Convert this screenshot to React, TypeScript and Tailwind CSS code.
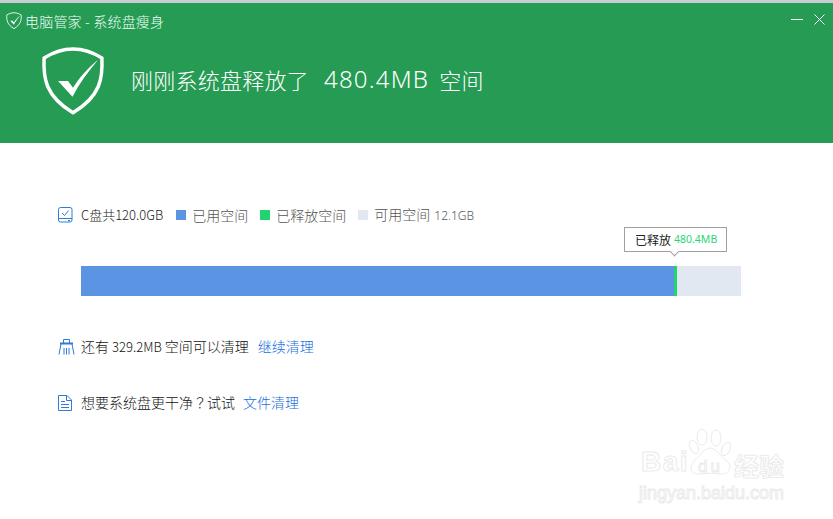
const cjk = "font-['Noto_Sans_CJK_SC','Liberation_Sans',sans-serif]";

function Legend({ color, label, extra }: { color: string; label: string; extra?: string }) {
  return (
    <div className="flex items-center">
      <span className={`w-[10px] h-[10px] ${color}`} />
      <span className="ml-[6px] text-[14px] leading-[16px] font-light text-[#555] mt-[-1px]">
        {label}
        {extra && <span className="font-['Noto_Sans'] text-[12px] ml-[4px]">{extra}</span>}
      </span>
    </div>
  );
}

function Shield({ size }: { size: number }) {
  return (
    <svg width={size} height={size * 1.09} viewBox="0 0 64 70" fill="none">
      <path
        d="M32 3C42 3 53 7 61 12C62 32 60 50 32 67C4 50 2 32 3 12C11 7 22 3 32 3Z"
        stroke="white"
        strokeWidth="3.5"
        strokeLinejoin="round"
      />
      <path d="M17 35L27 35L32 42C38 32 47 22 57 14C47 26 38 38 31.5 51Z" fill="white" />
    </svg>
  );
}

function DiskIcon() {
  return (
    <svg width="15" height="16" viewBox="0 0 15 16" fill="none" stroke="#2f7bdb">
      <rect x="0.5" y="0.5" width="13.5" height="14.5" rx="2" />
      <path d="M1 11.5H14" />
      <path d="M4 6L6.5 8.5L10.5 3.5" />
      <path d="M10 13.5H12" />
    </svg>
  );
}

function BroomIcon() {
  return (
    <svg width="17" height="16" viewBox="0 0 17 16" fill="none" stroke="#2f7bdb">
      <path d="M5.5 4V0.5H11.5V4" />
      <path d="M2 4.5H15" strokeWidth="2" />
      <path d="M3 5L1 15.5M14 5L16 15.5" />
      <path d="M6 9V15.5M8.5 9V15.5M11 9V15.5" />
    </svg>
  );
}

function DocIcon() {
  return (
    <svg width="14" height="16" viewBox="0 0 14 16" fill="none" stroke="#2f7bdb">
      <path d="M0.5 0.5H9L13.5 5V15.5H0.5Z" />
      <path d="M8.5 0.5V5.5H13.5" />
      <path d="M3 6.5H7M3 9.5H11M3 12.5H11" />
    </svg>
  );
}

function Watermark() {
  const outline = "text-white [-webkit-text-stroke:1px_#ebebeb]";
  return (
    <div className="absolute left-[638px] top-[428px] w-[160px] h-[80px] pointer-events-none">
      <svg className="absolute left-[50px] top-[0px]" width="46" height="48" viewBox="0 0 46 48" fill="white" stroke="#ebebeb">
        <ellipse cx="14" cy="9" rx="5" ry="8" />
        <ellipse cx="28" cy="10" rx="5" ry="8" />
        <ellipse cx="6" cy="19" rx="4" ry="7" transform="rotate(-25 6 19)" />
        <ellipse cx="38" cy="21" rx="4" ry="7" transform="rotate(25 38 21)" />
        <path d="M22 20C30 21 32 29 39 33C45 39 41 47 32 46C26 45 18 45 12 46C3 47 0 39 6 33C12 29 14 21 22 20Z" />
      </svg>
      <span className={`absolute left-[3px] top-[18px] font-['Liberation_Sans'] font-bold text-[28px] leading-[32px] tracking-[1.5px] ${outline}`}>
        Bai
      </span>
      <span className={`absolute left-[60px] top-[29px] font-['Liberation_Sans'] text-[17px] leading-[20px] tracking-[3px] ${outline}`}>
        du
      </span>
      <span className={`absolute left-[96px] top-[22px] ${cjk} font-bold text-[25px] leading-[30px] ${outline}`}>
        经验
      </span>
      <span className={`absolute left-[1px] top-[54px] font-['Liberation_Sans'] text-[18px] leading-[22px] ${outline}`}>
        jingyan.baidu.com
      </span>
    </div>
  );
}

export default function App() {
  return (
    <div className={`relative w-[833px] h-[519px] overflow-hidden bg-white ${cjk}`}>
      <div className="h-[3px] bg-[#c9ccd0]" />
      <header className="h-[140px] bg-[#259b54] text-white relative">
        <div className="flex items-center h-[35px] pl-[6px]">
          <Shield size={16} />
          <span className="ml-[3px] text-[14px] leading-[16px] tracking-[0.2px] font-light text-[#f0fff5]">
            电脑管家 - 系统盘瘦身
          </span>
        </div>
        <div className="absolute right-[8px] top-[11px] flex items-center gap-[11px]">
          <span className="w-[12px] h-px bg-white" />
          <svg width="11" height="11" viewBox="0 0 11 11" stroke="white">
            <path d="M0.5 0.5L10.5 10.5M10.5 0.5L0.5 10.5" />
          </svg>
        </div>
        <div className="flex items-center pl-[41px] mt-[8px]">
          <Shield size={64} />
          <h1 className="ml-[26px] flex items-center text-[22px] leading-[30px] tracking-[0.25px] font-light mt-[-4px] whitespace-nowrap">
            刚刚系统盘释放了
            <span className="ml-[15px] mr-[10px] font-['Noto_Sans'] font-light text-[24px] tracking-[1.2px]">480.4MB</span>
            空间
          </h1>
        </div>
      </header>

      <main className="pl-[58px] pt-[64px]">
        <div className="flex items-center h-[16px]">
          <DiskIcon />
          <span className="ml-[8px] text-[13px] leading-[16px] font-light text-[#222]">C盘共120.0GB</span>
          <div className="ml-[13px] flex items-center gap-[12px]">
            <Legend color="bg-[#5a94e2]" label="已用空间" />
            <Legend color="bg-[#23d46e]" label="已释放空间" />
            <Legend color="bg-[#e1e8f2]" label="可用空间" extra="12.1GB" />
          </div>
        </div>

        <div className="relative ml-[23px] mt-[43px] w-[660px] h-[30px] flex">
          <div className="w-[593px] bg-[#5a94e2]" />
          <div className="w-[3px] bg-[#23d46e]" />
          <div className="flex-1 bg-[#e1e8f2]" />
          <div className="absolute left-[543px] top-[-39px] w-[103px] h-[25px] bg-white border border-[#a0a0a0] flex items-center pl-[10px] text-[12px] text-[#222] whitespace-nowrap">
            已释放
            <span className="ml-[3px] font-['Noto_Sans'] text-[10.5px] text-[#2ad67a]">480.4MB</span>
            <span className="absolute left-[46px] bottom-[-4px] w-[7px] h-[7px] bg-white border-r border-b border-[#a0a0a0] rotate-45" />
          </div>
        </div>

        <div className="flex items-center h-[16px] mt-[43px]">
          <BroomIcon />
          <span className="ml-[6px] text-[14px] leading-[16px] font-light text-[#111] mt-[-2px]">
            还有 <span className="text-[13px]">329.2MB</span> 空间可以清理
          </span>
          <span className="ml-[9px] text-[14px] leading-[16px] font-light text-[#1a6fdc] mt-[-2px]">继续清理</span>
        </div>
        <div className="flex items-center h-[16px] mt-[40px]">
          <DocIcon />
          <span className="ml-[9px] text-[14px] leading-[16px] font-light text-[#111] mt-[-2px]">
            想要系统盘更干净<span className="font-['Noto_Sans_CJK_TC']">？</span>试试
          </span>
          <span className="ml-[8px] text-[14px] leading-[16px] font-light text-[#1a6fdc] mt-[-2px]">文件清理</span>
        </div>
      </main>

      <Watermark />
    </div>
  );
}
